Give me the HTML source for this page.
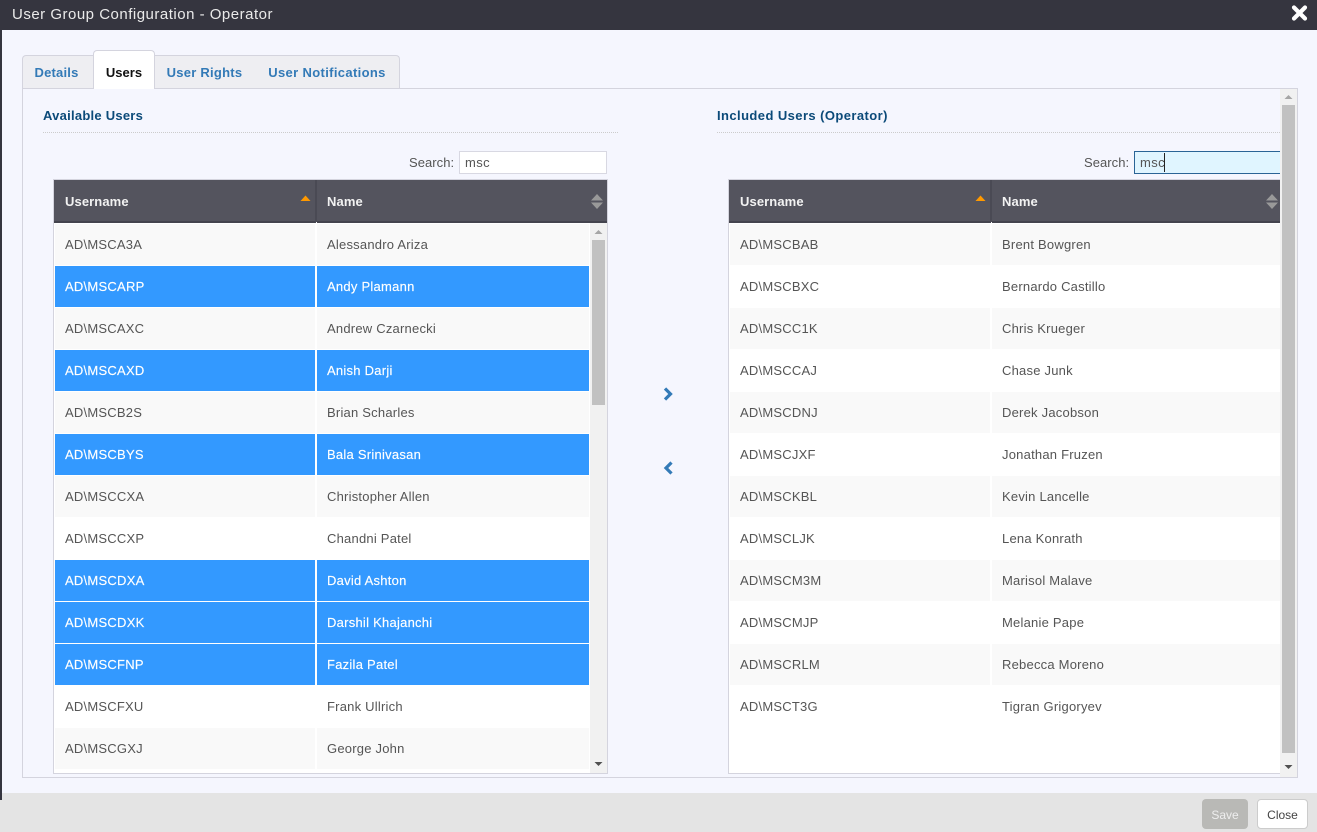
<!DOCTYPE html>
<html><head><meta charset="utf-8">
<style>
html,body{margin:0;padding:0}
body{width:1317px;height:832px;position:relative;overflow:hidden;background:#f5f6fe;font-family:"Liberation Sans",sans-serif;font-size:13px;color:#555}
.a{position:absolute;white-space:nowrap}
.tab{position:absolute;top:55px;height:33px;background:#eeeef2;border:1px solid #d4d4de;border-bottom:0;box-sizing:border-box;font-weight:bold;color:#337ab7;font-size:13px;line-height:34px;text-align:center}
.h{font-weight:bold;color:#0b4a79;font-size:13px;letter-spacing:.25px}
.dots{position:absolute;height:0;border-top:1px dotted #ccc}
.r{position:absolute;height:42px;box-sizing:border-box}
.c{position:absolute;top:0;height:41px;line-height:42px;white-space:nowrap;letter-spacing:.22px;color:#555;box-sizing:border-box;padding-left:10px}
.l{left:0;width:260px}.n{left:262px;width:272px}.m{left:262px;width:288px}
.o .c{background:#f9f9f9}.e .c{background:#fff}
.s .c{background:#3399ff;color:#fff;-webkit-text-stroke:.15px #fff;letter-spacing:.25px}
.hd{position:absolute;top:180px;height:43px;background:#54545e;border-bottom:2px solid #44444e;box-sizing:border-box;color:#f2f2f2;font-weight:bold;line-height:43px;font-size:13px;letter-spacing:.1px}
</style></head><body>
<!-- chrome -->
<div class="a" style="left:0;top:0;width:1317px;height:30px;background:#35353f"></div>
<div class="a" style="left:0;top:30px;width:2px;height:770px;background:#35353f"></div>
<div class="a" style="left:12px;top:5px;color:#eaeaea;font-size:15px;line-height:19px;letter-spacing:.5px">User Group Configuration - Operator</div>
<svg class="a" style="left:1291px;top:5px" width="17" height="16" viewBox="0 0 17 16"><path d="M3 2.5L14 13.5M14 2.5L3 13.5" stroke="#fff" stroke-width="4.2" stroke-linecap="round" fill="none"/></svg>

<!-- panel -->
<div class="a" style="left:22px;top:88px;width:1276px;height:690px;box-sizing:border-box;border:1px solid #d4d4de"></div>

<!-- tabs -->
<div class="tab" style="left:22px;width:72px;border-radius:4px 0 0 0;padding-right:3px;letter-spacing:.2px">Details</div>
<div class="tab" style="left:154px;width:101px;border-left:0;border-right:0;letter-spacing:.25px">User Rights</div>
<div class="tab" style="left:255px;width:145px;border-left:0;border-radius:0 4px 0 0;letter-spacing:.35px">User Notifications</div>
<div class="tab" style="left:93px;top:50px;width:62px;height:39px;background:#fff;color:#111;line-height:44px;border-radius:4px 4px 0 0">Users</div>

<!-- left -->
<div class="a h" style="left:43px;top:108px">Available Users</div>
<div class="dots" style="left:43px;top:132px;width:575px"></div>
<div class="a" style="left:409px;top:155px;letter-spacing:.05px">Search:</div>
<div class="a" style="left:459px;top:151px;width:148px;height:23px;box-sizing:border-box;background:#fff;border:1px solid #d8d8e2;padding-left:5px;line-height:21px;letter-spacing:.4px">msc</div>

<div class="a" style="left:53px;top:179px;width:555px;height:595px;box-sizing:border-box;border:1px solid #d4d4de;background:#fff"></div>
<div class="hd" style="left:54px;width:262px;padding-left:11px">Username</div>
<div class="a" style="left:315px;top:180px;width:2px;height:42px;background:#4a4a54"></div>
<div class="hd" style="left:317px;width:290px;padding-left:10px">Name</div>
<svg class="a" style="left:300px;top:195px" width="11" height="6"><path d="M0.5 6L5.5 0.5L10.5 6Z" fill="#f90"/></svg>
<svg class="a" style="left:590px;top:193px" width="14" height="17"><path d="M1 7.5L7 1L13 7.5ZM1 9.5L7 16L13 9.5Z" fill="#999"/></svg>

<div class="r o" style="left:55px;top:224px"><div class="c l">AD\MSCA3A</div><div class="c n">Alessandro Ariza</div></div>
<div class="r s" style="left:55px;top:266px"><div class="c l">AD\MSCARP</div><div class="c n">Andy Plamann</div></div>
<div class="r o" style="left:55px;top:308px"><div class="c l">AD\MSCAXC</div><div class="c n">Andrew Czarnecki</div></div>
<div class="r s" style="left:55px;top:350px"><div class="c l">AD\MSCAXD</div><div class="c n">Anish Darji</div></div>
<div class="r o" style="left:55px;top:392px"><div class="c l">AD\MSCB2S</div><div class="c n">Brian Scharles</div></div>
<div class="r s" style="left:55px;top:434px"><div class="c l">AD\MSCBYS</div><div class="c n">Bala Srinivasan</div></div>
<div class="r o" style="left:55px;top:476px"><div class="c l">AD\MSCCXA</div><div class="c n">Christopher Allen</div></div>
<div class="r e" style="left:55px;top:518px"><div class="c l">AD\MSCCXP</div><div class="c n">Chandni Patel</div></div>
<div class="r s" style="left:55px;top:560px"><div class="c l">AD\MSCDXA</div><div class="c n">David Ashton</div></div>
<div class="r s" style="left:55px;top:602px"><div class="c l">AD\MSCDXK</div><div class="c n">Darshil Khajanchi</div></div>
<div class="r s" style="left:55px;top:644px"><div class="c l">AD\MSCFNP</div><div class="c n">Fazila Patel</div></div>
<div class="r e" style="left:55px;top:686px"><div class="c l">AD\MSCFXU</div><div class="c n">Frank Ullrich</div></div>
<div class="r o" style="left:55px;top:728px"><div class="c l">AD\MSCGXJ</div><div class="c n">George John</div></div>

<!-- left scrollbar -->
<div class="a" style="left:590px;top:223px;width:17px;height:550px;background:#f1f1f1"></div>
<div class="a" style="left:592px;top:240px;width:13px;height:165px;background:#c1c1c1"></div>
<svg class="a" style="left:594px;top:229px" width="9" height="6"><path d="M0.5 5L4.5 1L8.5 5Z" fill="#a6a6a6"/></svg>
<svg class="a" style="left:594px;top:761px" width="9" height="6"><path d="M0.5 1L4.5 5L8.5 1Z" fill="#505050"/></svg>

<!-- arrows -->
<svg class="a" style="left:660px;top:386px" width="16" height="16"><path d="M5 2.5L10.5 8L5 13.5" fill="none" stroke="#337ab7" stroke-width="3.2"/></svg>
<svg class="a" style="left:660px;top:460px" width="16" height="16"><path d="M11.5 2.5L6 8L11.5 13.5" fill="none" stroke="#337ab7" stroke-width="3.2"/></svg>

<!-- right -->
<div class="a h" style="left:717px;top:108px;letter-spacing:.42px">Included Users (Operator)</div>
<div class="dots" style="left:717px;top:132px;width:563px"></div>
<div class="a" style="left:1084px;top:155px;letter-spacing:.05px">Search:</div>
<div class="a" style="left:1134px;top:151px;width:146px;height:23px;box-sizing:border-box;background:#e0f5ff;border:1px solid #2a6496;border-right:0;padding-left:5px;line-height:21px;letter-spacing:.4px">msc</div>
<div class="a" style="left:1164px;top:153px;width:1px;height:19px;background:#222"></div>

<div class="a" style="left:728px;top:179px;width:553px;height:595px;box-sizing:border-box;border:1px solid #d4d4de;border-right:0;background:#fff"></div>
<div class="hd" style="left:729px;width:262px;padding-left:11px">Username</div>
<div class="a" style="left:990px;top:180px;width:2px;height:42px;background:#4a4a54"></div>
<div class="hd" style="left:992px;width:288px;padding-left:10px">Name</div>
<svg class="a" style="left:975px;top:195px" width="11" height="6"><path d="M0.5 6L5.5 0.5L10.5 6Z" fill="#f90"/></svg>
<svg class="a" style="left:1265px;top:193px" width="14" height="17"><path d="M1 7.5L7 1L13 7.5ZM1 9.5L7 16L13 9.5Z" fill="#999"/></svg>

<div class="r o" style="left:730px;top:224px"><div class="c l">AD\MSCBAB</div><div class="c m">Brent Bowgren</div></div>
<div class="r e" style="left:730px;top:266px"><div class="c l">AD\MSCBXC</div><div class="c m">Bernardo Castillo</div></div>
<div class="r o" style="left:730px;top:308px"><div class="c l">AD\MSCC1K</div><div class="c m">Chris Krueger</div></div>
<div class="r e" style="left:730px;top:350px"><div class="c l">AD\MSCCAJ</div><div class="c m">Chase Junk</div></div>
<div class="r o" style="left:730px;top:392px"><div class="c l">AD\MSCDNJ</div><div class="c m">Derek Jacobson</div></div>
<div class="r e" style="left:730px;top:434px"><div class="c l">AD\MSCJXF</div><div class="c m">Jonathan Fruzen</div></div>
<div class="r o" style="left:730px;top:476px"><div class="c l">AD\MSCKBL</div><div class="c m">Kevin Lancelle</div></div>
<div class="r e" style="left:730px;top:518px"><div class="c l">AD\MSCLJK</div><div class="c m">Lena Konrath</div></div>
<div class="r o" style="left:730px;top:560px"><div class="c l">AD\MSCM3M</div><div class="c m">Marisol Malave</div></div>
<div class="r e" style="left:730px;top:602px"><div class="c l">AD\MSCMJP</div><div class="c m">Melanie Pape</div></div>
<div class="r o" style="left:730px;top:644px"><div class="c l">AD\MSCRLM</div><div class="c m">Rebecca Moreno</div></div>
<div class="r e" style="left:730px;top:686px"><div class="c l">AD\MSCT3G</div><div class="c m">Tigran Grigoryev</div></div>

<!-- outer scrollbar -->
<div class="a" style="left:1280px;top:89px;width:17px;height:688px;background:#f1f1f1"></div>
<div class="a" style="left:1282px;top:105px;width:13px;height:648px;background:#c1c1c1"></div>
<svg class="a" style="left:1284px;top:94px" width="9" height="6"><path d="M0.5 5L4.5 1L8.5 5Z" fill="#a6a6a6"/></svg>
<svg class="a" style="left:1284px;top:764px" width="9" height="6"><path d="M0.5 1L4.5 5L8.5 1Z" fill="#505050"/></svg>

<!-- footer -->
<div class="a" style="left:2px;top:793px;width:1315px;height:39px;background:#e4e4e4"></div>
<div class="a" style="left:0;top:800px;width:2px;height:32px;background:#e4e4e4"></div>
<div class="a" style="left:1202px;top:799px;width:46px;height:30px;background:#b9b9b6;border-radius:4px;color:#eee;font-size:12px;line-height:32px;text-align:center">Save</div>
<div class="a" style="left:1257px;top:799px;width:51px;height:30px;box-sizing:border-box;background:#fff;border:1px solid #ccc;border-radius:4px;color:#444;font-size:12px;line-height:30px;text-align:center">Close</div>
</body></html>
